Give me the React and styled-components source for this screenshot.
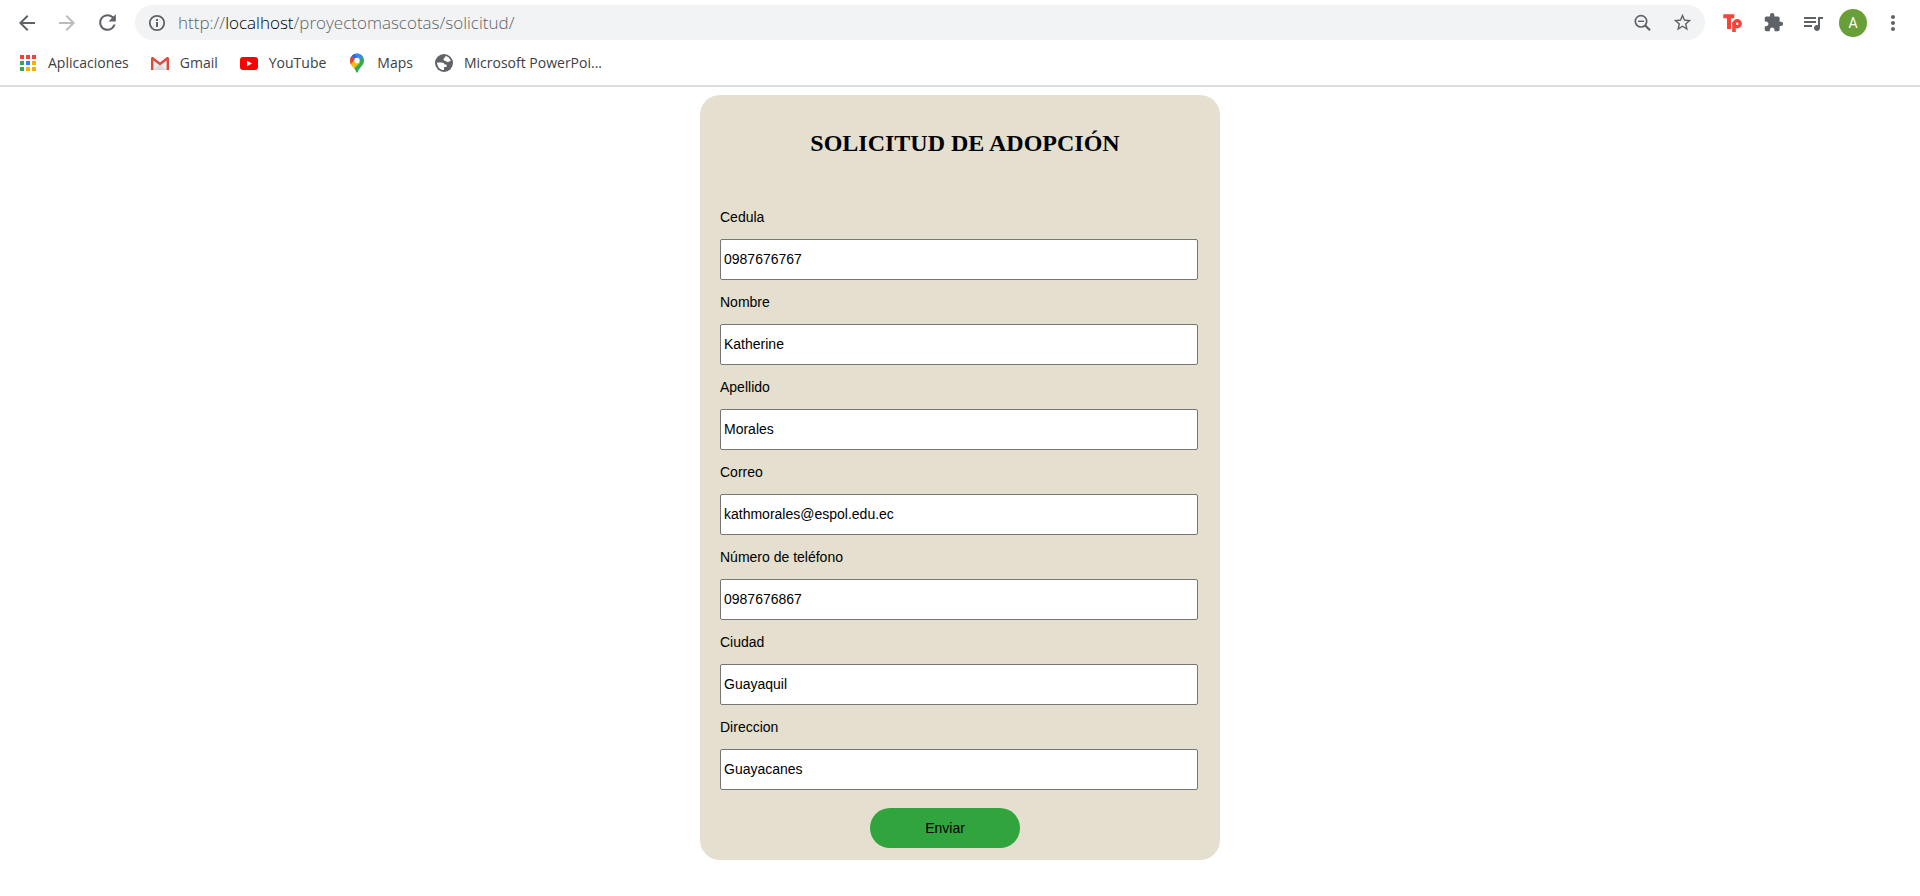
import React from 'react';
import styled, { createGlobalStyle } from 'styled-components';
import {
  MdArrowBack,
  MdArrowForward,
  MdRefresh,
  MdStarBorder,
  MdExtension,
  MdQueueMusic,
  MdMoreVert,
} from 'react-icons/md';

const uiFont = '"Open Sans", "Noto Sans", sans-serif';
const formFont = '"Liberation Sans", Arial, sans-serif';

const GlobalStyle = createGlobalStyle`
  * { box-sizing: border-box; }
  body { margin: 0; background: #fff; color: #000; }
`;

const BrowserHeader = styled.header`
  border-bottom: 2px solid #dadce0;
  background: #fff;
  font-family: ${uiFont};
`;

const Toolbar = styled.div`
  display: flex;
  align-items: center;
  gap: 8px;
  padding: 5px 7px;
`;

const ButtonGroup = styled.div`
  display: flex;
  flex: none;
`;

const IconButton = styled.button`
  display: flex;
  align-items: center;
  justify-content: center;
  width: 40px;
  height: 35px;
  padding: 0;
  border: 0;
  background: transparent;
  color: ${(p) => (p.$muted ? '#babcbe' : '#5f6368')};
`;

const AddressBar = styled.div`
  display: flex;
  align-items: center;
  flex: 1;
  min-width: 0;
  height: 35px;
  padding: 0 3px 0 12px;
  border-radius: 18px;
  background: #f1f3f4;
  color: #5f6368;
`;

const Address = styled.div`
  flex: 1;
  min-width: 0;
  margin-left: 11px;
  overflow: hidden;
  white-space: nowrap;
  font-size: 17px;
  font-weight: 350;
  line-height: 24px;
  color: #5f6368;
`;

const Host = styled.span`
  color: #000;
`;

const Avatar = styled.span`
  display: flex;
  align-items: center;
  justify-content: center;
  width: 28px;
  height: 28px;
  border-radius: 50%;
  background: #689f38;
  color: #fff;
  font: 14px/20px Roboto, sans-serif;
`;

const BookmarkBar = styled.nav`
  display: flex;
  align-items: center;
  gap: 21px;
  height: 40px;
  padding: 0 18px 5px;
`;

const Bookmark = styled.a`
  display: flex;
  align-items: center;
  gap: 10px;
  color: #3c4043;
  font-size: 14px;
  line-height: 20px;
  text-decoration: none;
  white-space: nowrap;
`;

const Page = styled.main`
  padding: 8px;
`;

const Card = styled.form`
  width: 520px;
  max-width: 100%;
  margin: 0 auto;
  padding: 20px 22px 12px 20px;
  border-radius: 20px;
  background: #e4dfce;
  font-family: ${formFont};
  font-size: 14px;
`;

const Title = styled.h1`
  margin: 14px 0 52px;
  padding-left: 12px;
  font: bold 24px/28px "Liberation Serif", "Times New Roman", serif;
  text-align: center;
`;

const Field = styled.div`
  display: flex;
  flex-direction: column;
  gap: 14px;
  margin-bottom: 14px;
`;

const Label = styled.label`
  line-height: 16px;
`;

const TextInput = styled.input`
  width: 100%;
  height: 41px;
  padding: 0 3px 2px;
  border: 1px solid #767676;
  border-radius: 2px;
  background: #fff;
  color: #000;
  font: inherit;
`;

const SubmitButton = styled.button`
  display: block;
  width: 150px;
  height: 40px;
  margin: 18px 0 0 150px;
  border: 0;
  border-radius: 20px;
  background: #32a43e;
  color: #000;
  font: inherit;
`;

const InfoIcon = () => (
  <svg width="20" height="20" viewBox="0 0 20 20" aria-hidden="true">
    <circle cx="10" cy="10" r="7.2" fill="none" stroke="currentColor" strokeWidth="1.8" />
    <path fill="none" stroke="currentColor" strokeWidth="2" d="M10 9v5M10 5.900v2" />
  </svg>
);

const ZoomOutIcon = () => (
  <svg width="20" height="20" viewBox="0 0 20 20" fill="none" stroke="currentColor" aria-hidden="true">
    <circle cx="9" cy="8.300" r="5.700" strokeWidth="1.700" />
    <path strokeWidth="2.200" d="M13 12.300l5 5" />
    <path strokeWidth="1.400" d="M6 8.300h6" />
  </svg>
);

const AppsIcon = () => (
  <svg width="20" height="20" viewBox="0 0 20 20" aria-hidden="true">
    <path fill="#f44336" d="M2 2h4v4H2zM8 2h4v4H8zM14 2h4v4h-4z" />
    <path fill="#34a853" d="M2 8h4v4H2zM2 14h4v4H2z" />
    <path fill="#1e88f5" d="M8 8h4v4H8z" />
    <path fill="#fbae04" d="M14 8h4v4h-4zM8 14h4v4H8zM14 14h4v4h-4z" />
  </svg>
);

const GmailIcon = () => (
  <svg width="20" height="20" viewBox="0 0 20 20" aria-hidden="true">
    <rect x="1" y="4" width="18" height="13" rx="1.500" fill="#eee" />
    <path fill="#dcdcdc" d="M3.500 17l6.500-6 6.500 6z" />
    <path fill="#f7f7f7" d="M3 4h14l-7 6z" />
    <path
      fill="#dd4b3e"
      d="M1 5.500C1 4.600 1.700 4 2.500 4c.5 0 .8.200 1.100.4L10 9.400l6.400-5c.3-.2.600-.4 1.100-.4.800 0 1.500.6 1.500 1.500V17h-2.400V7.600L10 12.600 3.400 7.600V17H1z"
    />
  </svg>
);

const YouTubeIcon = () => (
  <svg width="20" height="20" viewBox="0 0 20 20" aria-hidden="true">
    <rect x="1" y="4" width="18" height="13" rx="3" fill="#f00" />
    <path fill="#fff" d="M8 7.800v5.400l5-2.700z" />
  </svg>
);

const MapsIcon = () => (
  <svg width="20" height="20" viewBox="0 0 20 20" aria-hidden="true">
    <clipPath id="pin">
      <path d="M10 .5a7 7 0 0 0-7 7c0 3 1.500 4.500 3.500 7 1.500 2 2.300 3 2.700 4.500.3.900 1.300.9 1.600 0 .4-1.500 1.200-2.500 2.700-4.500 2-2.500 3.500-4 3.500-7a7 7 0 0 0-7-7z" />
    </clipPath>
    <g clipPath="url(#pin)">
      <path fill="#34a853" d="M0 0h20v20H0z" />
      <path fill="#fbbc04" d="M3 13.500L1 9l6-5 6 6-7.500 7z" />
      <path fill="#ea4335" d="M0 0l4.600 2.800L8.500 6 3 12H0z" />
      <path fill="#4285f4" d="M4.600 3L8 -1h9l-1 4-5 6-2-4z" />
      <path fill="#1a73e8" d="M4.600 3L7 0l3 4.500L8 6z" />
    </g>
    <circle cx="10" cy="7.500" r="2.700" fill="#fff" />
  </svg>
);

const GlobeIcon = () => (
  <svg width="20" height="20" viewBox="0 0 20 20" aria-hidden="true">
    <circle cx="10" cy="10" r="9" fill="#5f6368" />
    <path
      fill="#fff"
      d="M11.500 3.100c2.300.5 4.400 2.100 5.300 4.600-1 .1-1.600 1.300-3.100 1.300-1.200 0-1.600-1.200-2.900-1.300-1.200-.1-1.600-1-1.100-1.900.5-1.100 1.600-1.300 1.800-2.700zM3.100 9.400h4.700c1.700 0 2.700 1 2.700 2.200h2v2.300H10V17c-3.800 0-6.900-3.100-6.900-7.600z"
    />
  </svg>
);

const TpIcon = () => (
  <svg width="20" height="20" viewBox="0 0 20 20" aria-hidden="true">
    <g fill="none" stroke="#f9423a">
      <path strokeWidth="4" d="M.3 3.300h11M6 3v13" />
      <circle cx="14.200" cy="10.700" r="3" strokeWidth="3.400" />
      <path strokeWidth="3.600" d="M11 9v10" />
    </g>
  </svg>
);

const bookmarks = [
  { name: 'Aplicaciones', icon: AppsIcon },
  { name: 'Gmail', icon: GmailIcon },
  { name: 'YouTube', icon: YouTubeIcon },
  { name: 'Maps', icon: MapsIcon },
  { name: 'Microsoft PowerPoi...', icon: GlobeIcon },
];

const fields = [
  { id: 'cedula', label: 'Cedula', value: '0987676767' },
  { id: 'nombre', label: 'Nombre', value: 'Katherine' },
  { id: 'apellido', label: 'Apellido', value: 'Morales' },
  { id: 'correo', label: 'Correo', value: 'kathmorales@espol.edu.ec', type: 'email' },
  { id: 'telefono', label: 'Número de teléfono', value: '0987676867', type: 'tel' },
  { id: 'ciudad', label: 'Ciudad', value: 'Guayaquil' },
  { id: 'direccion', label: 'Direccion', value: 'Guayacanes' },
];

export default function App() {
  return (
    <>
      <GlobalStyle />
      <BrowserHeader>
        <Toolbar>
          <ButtonGroup>
            <IconButton aria-label="Atrás"><MdArrowBack size={24} /></IconButton>
            <IconButton aria-label="Adelante" $muted><MdArrowForward size={24} /></IconButton>
            <IconButton aria-label="Recargar"><MdRefresh size={25} /></IconButton>
          </ButtonGroup>
          <AddressBar>
            <InfoIcon />
            <Address role="textbox" aria-label="Dirección web">
              http://<Host>localhost</Host>/proyectomascotas/solicitud/
            </Address>
            <IconButton aria-label="Zoom"><ZoomOutIcon /></IconButton>
            <IconButton aria-label="Favorito"><MdStarBorder size={21} /></IconButton>
          </AddressBar>
          <ButtonGroup>
            <IconButton aria-label="Tp"><TpIcon /></IconButton>
            <IconButton aria-label="Extensiones"><MdExtension size={21} /></IconButton>
            <IconButton aria-label="Multimedia"><MdQueueMusic size={24} /></IconButton>
            <IconButton aria-label="Perfil"><Avatar>A</Avatar></IconButton>
            <IconButton aria-label="Menú"><MdMoreVert size={24} /></IconButton>
          </ButtonGroup>
        </Toolbar>
        <BookmarkBar>
          {bookmarks.map(({ name, icon: Icon }) => (
            <Bookmark key={name} href="#">
              <Icon />
              {name}
            </Bookmark>
          ))}
        </BookmarkBar>
      </BrowserHeader>
      <Page>
        <Card onSubmit={(e) => e.preventDefault()}>
          <Title>SOLICITUD DE ADOPCIÓN</Title>
          {fields.map(({ id, label, value, type = 'text' }) => (
            <Field key={id}>
              <Label htmlFor={id}>{label}</Label>
              <TextInput id={id} type={type} defaultValue={value} />
            </Field>
          ))}
          <SubmitButton type="submit">Enviar</SubmitButton>
        </Card>
      </Page>
    </>
  );
}
